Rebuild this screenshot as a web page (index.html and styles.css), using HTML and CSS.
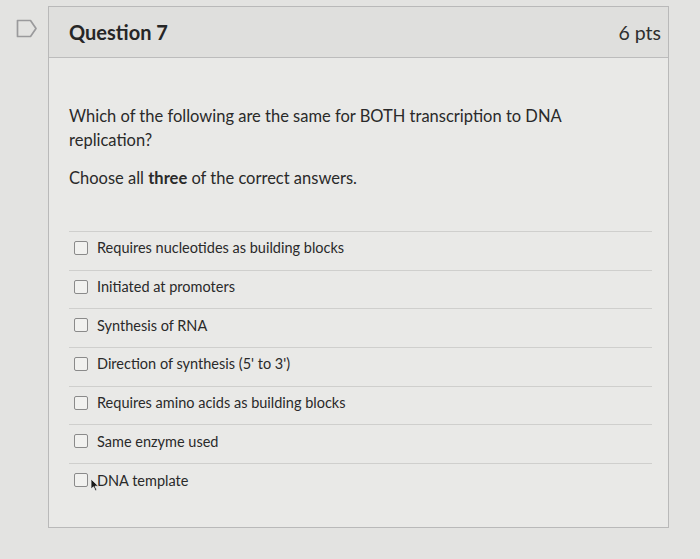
FILE: index.html
```html
<!DOCTYPE html>
<html>
<head>
<meta charset="utf-8">
<link rel="stylesheet" href="styles.css">
</head>
<body>
<div class="page">
  <div class="gutter">
    <svg class="flag" width="22" height="19" viewBox="0 0 22 19"><path d="M1.5 1.5 H14.5 L20 9.5 L14.5 17.5 H1.5 Z" fill="none" stroke="#9a9a9c" stroke-width="1.7" stroke-linejoin="round"/></svg>
  </div>
  <div class="card">
    <div class="head">
      <span class="title">Question 7</span>
      <span class="pts">6 pts</span>
    </div>
    <div class="body">
      <p class="q">Which of the following are the same for BOTH transcription to DNA replication?</p>
      <p class="q instr">Choose all <b>three</b> of the correct answers.</p>
      <ul class="answers">
        <li><span class="box"></span>Requires nucleotides as building blocks</li>
        <li><span class="box"></span>Initiated at promoters</li>
        <li><span class="box"></span>Synthesis of RNA</li>
        <li><span class="box"></span>Direction of synthesis (5' to 3')</li>
        <li><span class="box"></span>Requires amino acids as building blocks</li>
        <li><span class="box"></span>Same enzyme used</li>
        <li class="last"><span class="box"></span>DNA template
          <svg class="cursor" width="10" height="14" viewBox="0 0 10 14"><path d="M1 1 L1 11 L3.5 8.8 L5.5 13 L7 12.3 L5 8.2 L8.5 8.2 Z" fill="#1a1a1a" stroke="#f0f0f0" stroke-width="0.8"/></svg>
        </li>
      </ul>
    </div>
  </div>
</div>
</body>
</html>
```
FILE: styles.css
```css
html, body {
  margin: 0;
  padding: 0;
  background: #e3e3e1;
  font-family: Lato, "Open Sans", sans-serif;
  color: #2b2b2b;
}
.page {
  display: flex;
  padding-top: 6px;
  height: 553px;
}
.gutter {
  width: 48px;
  flex: none;
}
.flag {
  display: block;
  margin: 13px 0 0 16px;
}
.card {
  width: 621px;
  height: 522px;
  border: 1px solid #b9b9b9;
  background: #e9e9e7;
  box-sizing: border-box;
}
.head {
  height: 51px;
  box-sizing: border-box;
  background: #dfdfdd;
  border-bottom: 1px solid #bcbcbc;
  display: flex;
  align-items: center;
  justify-content: space-between;
  padding: 0 7px 0 20px;
}
.title {
  font-size: 20px;
  font-weight: 700;
  color: #262626;
}
.pts {
  font-size: 19.5px;
  color: #2e2e2e;
}
.body {
  padding: 46px 16px 0 20px;
}
.q {
  margin: 0;
  font-size: 16.5px;
  line-height: 24px;
  width: 520px;
  color: #2a2a2a;
}
.instr {
  margin-top: 14px;
}
.answers {
  list-style: none;
  margin: 41px 0 0 0;
  padding: 0;
  border-top: 1px solid #cfcfcd;
}
.answers li {
  position: relative;
  height: 38.7px;
  box-sizing: border-box;
  border-bottom: 1px solid #cfcfcd;
  display: flex;
  align-items: center;
  padding: 0 0 6px 5px;
  font-size: 14.5px;
  color: #2a2a2a;
}
.answers li.last {
  border-bottom: none;
}
.box {
  width: 12px;
  height: 12px;
  border: 1px solid #8a8a8a;
  border-radius: 2px;
  background: #f1f1ef;
  margin-right: 9px;
  flex: none;
}
.cursor {
  position: absolute;
  left: 21px;
  top: 14px;
}
```
